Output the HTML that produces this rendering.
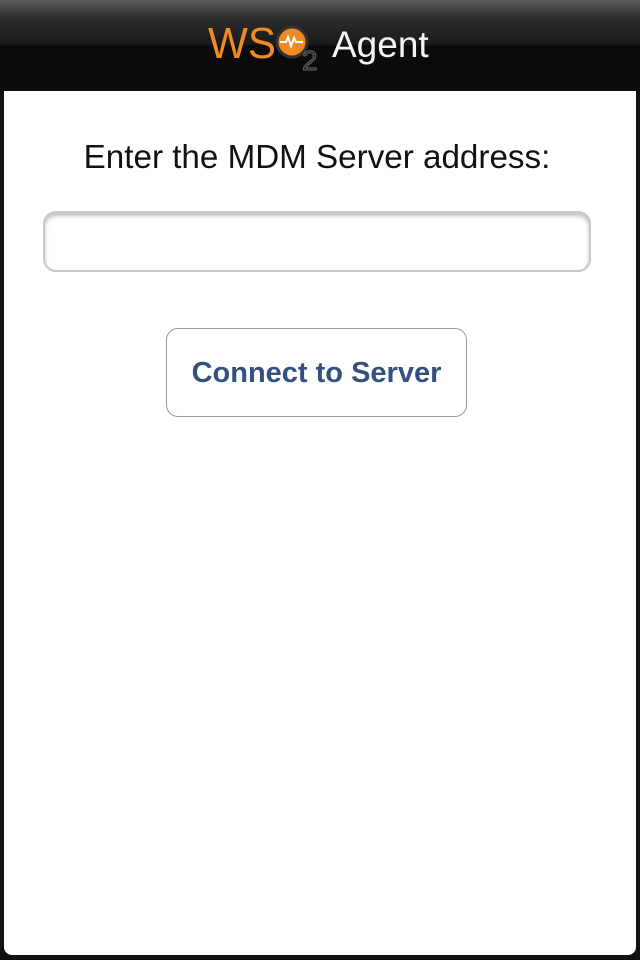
<!DOCTYPE html>
<html><head><style>
body{margin:0;width:640px;height:960px;background:#111;overflow:hidden;font-family:"Liberation Sans",sans-serif;position:relative}
.hdr{position:absolute;left:0;top:0;width:640px;height:91px;background:linear-gradient(#5a5a5a 0,#2a2a2a 20px,#1a1a1a 44px,#0b0b0b 46px,#0b0b0b 88px);}
.main{position:absolute;left:4px;top:91px;width:632px;height:864px;background:#fff;border-radius:0 0 8px 8px}
.lbl{position:absolute;top:139px;left:0;width:634px;text-align:center;font-size:33.2px;color:#111}
.inp{position:absolute;left:43px;top:211px;width:544px;height:57px;border:2px solid #c8c8c8;border-radius:13px;box-shadow:inset 0 3px 4px rgba(0,0,0,.25)}
.btn{position:absolute;left:166px;top:328px;width:299px;height:87px;border:1.5px solid #9a9a9a;border-radius:12px;background:#fff;text-align:center;line-height:89px;font-weight:bold;font-size:29px;color:#33507f}
</style></head><body>
<div class="hdr">
<svg width="640" height="91" style="position:absolute;left:0;top:0">
<text x="208" y="58" font-family="Liberation Sans" font-size="44" fill="#f08a24" textLength="68" lengthAdjust="spacingAndGlyphs">WS</text>
<circle cx="292" cy="42" r="15" fill="#f08a24" stroke="#333" stroke-width="3"/>
<path d="M280 42h6l2-5 3 9 3-8 2 4h7" stroke="#fff" stroke-width="2" fill="none"/>
<text x="302" y="70" font-family="Liberation Sans" font-size="28" fill="#222" stroke="#666" stroke-width="1">2</text>
<text x="332" y="57" font-family="Liberation Sans" font-size="37" fill="#f4f4f4">Agent</text>
</svg>
</div>
<div class="main"></div>
<div class="lbl">Enter the MDM Server address:</div>
<div class="inp"></div>
<div class="btn">Connect to Server</div>
</body></html>
